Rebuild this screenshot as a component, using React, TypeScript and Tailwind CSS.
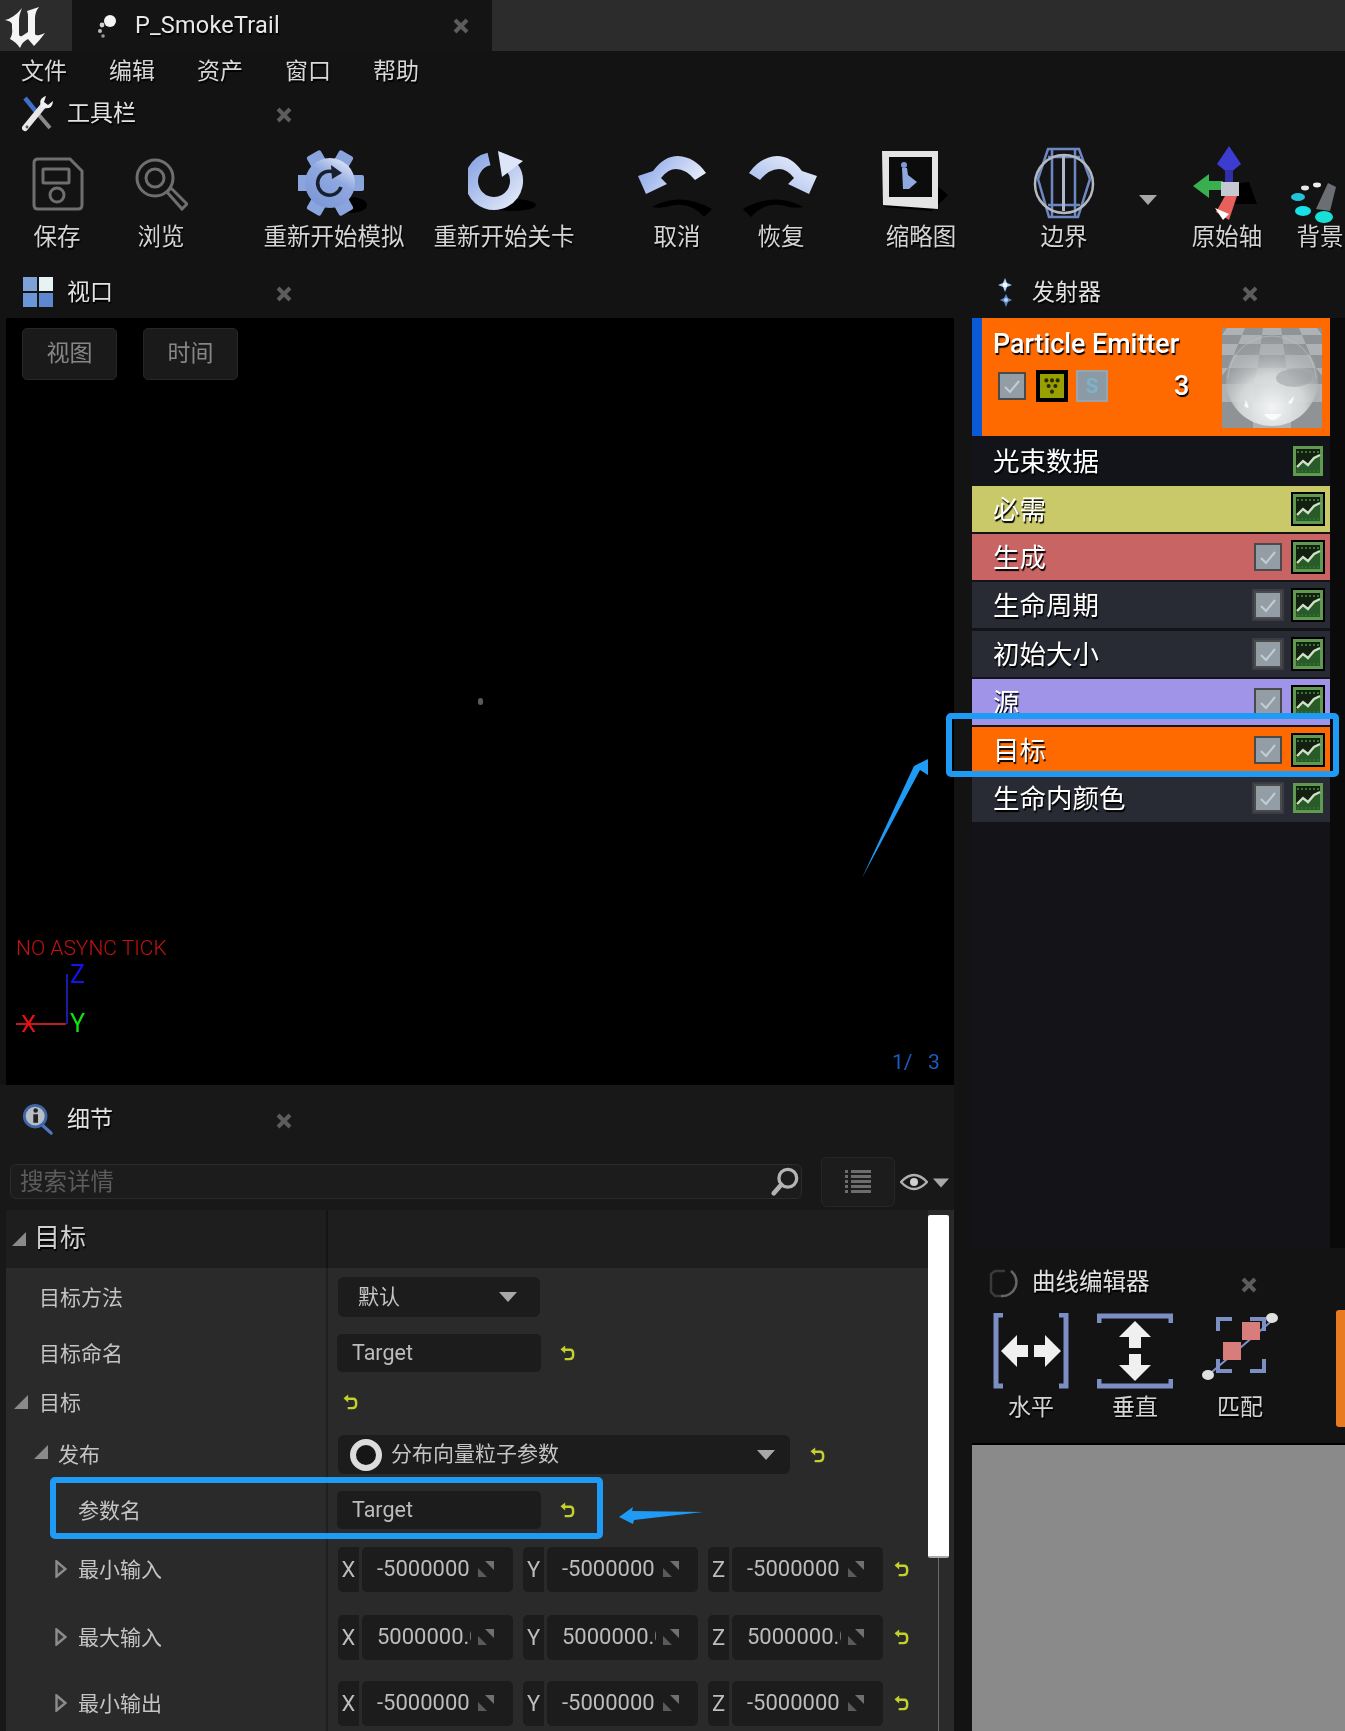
import React from "react";

const ts = "[text-shadow:1px_2px_1px_#000]";

function Close({ className = "" }: { className?: string }) {
  return (
    <svg viewBox="0 0 16 16" className={`w-[16px] h-[16px] shrink-0 ${className}`}>
      <path d="M2 2 L14 14 M14 2 L2 14" stroke="#5c5c5c" strokeWidth="4" />
    </svg>
  );
}
function DownTri({ className = "" }: { className?: string }) {
  return (
    <svg viewBox="0 0 18 10" className={`w-[18px] h-[10px] shrink-0 ${className}`}>
      <path d="M0 0 H18 L9 10 Z" fill="#a8a8a8" />
    </svg>
  );
}
function CornerTri({ size = 14, color = "#8a8a8a" }: { size?: number; color?: string }) {
  return (
    <svg viewBox="0 0 14 14" width={size} height={size} className="shrink-0">
      <path d="M14 0 V14 H0 Z" fill={color} />
    </svg>
  );
}
function OpenTri() {
  return (
    <svg viewBox="0 0 12 18" className="w-[12px] h-[18px] shrink-0">
      <path d="M1.5 1.5 L10.5 9 L1.5 16.5 Z" fill="#333" stroke="#8c8c8c" strokeWidth="2.4" />
    </svg>
  );
}
function Undo({ className = "" }: { className?: string }) {
  return (
    <svg viewBox="0 0 16 17" className={`w-[15px] h-[16px] shrink-0 ${className}`}>
      <path d="M5 5 H11 Q14 5 14 9 V11 Q14 15 10 15 H5" fill="none" stroke="#c4d02c" strokeWidth="2.6" />
      <path d="M0.5 4.5 L5.5 0.5 V9 Z" fill="#c4d02c" />
    </svg>
  );
}
function Check({ ring = false }: { ring?: boolean }) {
  return (
    <div
      className={`w-[28px] h-[28px] shrink-0 flex items-center justify-center bg-[#929da6] border-2 border-[#4a4a4a] ${
        ring ? "shadow-[0_0_0_2px_#3a3c45]" : ""
      }`}
    >
      <svg viewBox="0 0 20 20" className="w-[20px] h-[20px]">
        <path d="M3 11 L8 16 L17 5" fill="none" stroke="#c5ccd2" strokeWidth="2" />
      </svg>
    </div>
  );
}
function Graph({ dark = false }: { dark?: boolean }) {
  return (
    <div className={`w-[30px] h-[30px] shrink-0 ${dark ? "outline-2 outline-black" : ""}`}>
      <svg viewBox="0 0 30 30" className="w-[30px] h-[30px] block">
        <rect width="30" height="30" fill="#5f9a50" />
        <rect x="3" y="3" width="24" height="24" fill="#12200f" />
        <path d="M4 6 H27 M4 25 H27" stroke="#3f7238" strokeWidth="2" strokeDasharray="2 2" />
        <path d="M3 27 L3 22 L10 15 L15 19 L21 12 L27 9 V27 Z" fill="#2f6a2e" opacity="0.8" />
        <path d="M4 21 L10 15 L15 19 L21 12 L27 9" fill="none" stroke="#cfe0c6" strokeWidth="2.4" />
      </svg>
    </div>
  );
}

function ULogo() {
  return (
    <svg viewBox="0 0 44 44" className="w-[44px] h-[44px]">
      <path
        d="M3 16 Q12 14 20 4 Q17 11 17 16 V30 Q17 33 20 32 L26 28 V13 Q26 9 25 7 L37 3 Q33 8 33 14 V30 Q34 33 43 29 Q38 36 32 42 L26 35 Q20 38 18 44 Q14 38 8 35 Q11 30 10 24 V20 Q9 17 3 16 Z"
        fill="#f4f4f4"
      />
    </svg>
  );
}
function TabParticle() {
  return (
    <svg viewBox="0 0 24 30" className="w-[24px] h-[30px]">
      <circle cx="15" cy="10" r="6" fill="#f4f4f4" />
      <circle cx="7" cy="14" r="2.4" fill="#cfcfcf" />
      <circle cx="5" cy="20" r="2" fill="#bbb" />
      <circle cx="8" cy="25" r="1.8" fill="#999" />
    </svg>
  );
}
function ToolsIcon() {
  return (
    <svg viewBox="0 0 32 38" className="w-[32px] h-[38px]">
      <path d="M3 4 L16 20" stroke="#3f6fc8" strokeWidth="4.5" />
      <path d="M16 20 L28 34" stroke="#8a8a8a" strokeWidth="4" />
      <path d="M3 34 L21 12" stroke="#e8e8e8" strokeWidth="6" strokeLinecap="round" />
      <path d="M20 14 Q15 5 24 2 L22 8 L26 11 L31 7 Q31 16 20 14 Z" fill="#f0f0f0" />
      <circle cx="5" cy="33" r="1.4" fill="#555" />
    </svg>
  );
}
function SaveIcon() {
  return (
    <svg viewBox="0 0 54 54" className="w-[54px] h-[54px]">
      <path d="M4 6 Q4 2 8 2 H40 L52 14 V48 Q52 52 48 52 H8 Q4 52 4 48 Z" fill="none" stroke="#6f6f6f" strokeWidth="3" />
      <rect x="13" y="12" width="26" height="14" rx="1" fill="none" stroke="#6f6f6f" strokeWidth="3" />
      <circle cx="27" cy="38" r="7" fill="none" stroke="#6f6f6f" strokeWidth="3" />
    </svg>
  );
}
function BrowseIcon() {
  return (
    <svg viewBox="0 0 54 54" className="w-[54px] h-[54px]">
      <circle cx="21" cy="21" r="18" fill="none" stroke="#6f6f6f" strokeWidth="3" />
      <circle cx="21" cy="21" r="9" fill="none" stroke="#6f6f6f" strokeWidth="3" />
      <path d="M33 35 L37 31 L53 47 L48 52 Z" fill="none" stroke="#6f6f6f" strokeWidth="3" />
    </svg>
  );
}
function GearIcon() {
  return (
    <svg viewBox="298 141 72 78" className="w-[72px] h-[78px]">
      <defs>
        <linearGradient id="gg" x1="0.8" y1="0" x2="0.2" y2="1">
          <stop offset="0" stopColor="#e2e9f8" />
          <stop offset="0.4" stopColor="#90a8e0" />
          <stop offset="1" stopColor="#7a96d6" />
        </linearGradient>
      </defs>
      <ellipse cx="350" cy="204" rx="17" ry="8" fill="#000" />
      <g fill="#8aa4de">
        {[30, 90, 150, 210, 270, 330].map((a) => (
          <rect key={a} x="322" y="148" width="16" height="14" rx="2" transform={`rotate(${a} 330 182)`} />
        ))}
      </g>
      <circle cx="330" cy="182" r="25" fill="url(#gg)" />
      <path d="M341 186 A12 12 0 1 1 334 171" fill="none" stroke="#16202f" strokeWidth="3.5" />
      <path d="M331 164 L342 172 L332 178 Z" fill="#16202f" />
    </svg>
  );
}
function RestartIcon() {
  return (
    <svg viewBox="468 141 72 78" className="w-[72px] h-[78px]">
      <defs>
        <linearGradient id="rg" x1="0" y1="0" x2="1" y2="1">
          <stop offset="0" stopColor="#8ca6e4" />
          <stop offset="1" stopColor="#e0e7f8" />
        </linearGradient>
      </defs>
      <ellipse cx="512" cy="204" rx="24" ry="6" fill="#000" />
      <path d="M489 158 A22.5 22.5 0 1 0 512 166.4" fill="none" stroke="url(#rg)" strokeWidth="13" />
      <path d="M498 150 L523 160 L502 176 Z" fill="#dde5f8" />
    </svg>
  );
}
const undoD =
  "M638 175 L653 170 Q664 155 678 155 Q695 156 706 172 L695 179 Q686 168 676 168 Q668 168 661 177 L667 183 L646 193 Z";
const undoShadow = "M652 206 Q680 190 712 208 L704 216 Q690 200 670 205 Q660 208 652 206 Z";
function UndoBig() {
  return (
    <svg viewBox="632 141 90 78" className="w-[90px] h-[78px]">
      <defs>
        <linearGradient id="ug" x1="0" y1="0.3" x2="1" y2="0.7">
          <stop offset="0" stopColor="#8ea8e8" />
          <stop offset="1" stopColor="#eef2fc" />
        </linearGradient>
      </defs>
      <path d={undoShadow} fill="#000" />
      <path d={undoD} fill="url(#ug)" />
    </svg>
  );
}
function RedoBig() {
  return (
    <svg viewBox="736 141 90 78" className="w-[90px] h-[78px]">
      <defs>
        <linearGradient id="rdg" x1="0" y1="0" x2="1" y2="1">
          <stop offset="0" stopColor="#f0f4fc" />
          <stop offset="1" stopColor="#9cb4ea" />
        </linearGradient>
      </defs>
      <g transform="translate(1455 0) scale(-1 1)">
        <path d={undoShadow} fill="#000" />
        <path d={undoD} fill="url(#rdg)" />
      </g>
    </svg>
  );
}
function ThumbIcon() {
  return (
    <svg viewBox="0 0 72 72" className="w-[72px] h-[72px] -translate-x-[9px]">
      <path d="M8 62 L56 66 L72 50 L60 40 Z" fill="#000" />
      <path d="M6 6 H62 V64 L7 60 Z" fill="#e4e4e4" />
      <rect x="13" y="12" width="43" height="40" fill="#0c0c0c" />
      <circle cx="28" cy="20" r="3" fill="#7f9ad8" />
      <path d="M26 23 H31 L32 30 L41 37 L33 44 H27 Z" fill="#8fa8e0" />
    </svg>
  );
}
function BoundsIcon() {
  return (
    <svg viewBox="0 0 64 74" className="w-[64px] h-[74px]">
      <path d="M16 2 H47 L58 32 L46 70 H17 L6 32 Z" fill="none" stroke="#6d87c4" strokeWidth="2.5" />
      <path d="M20 3 V70 M43 3 V70 M16 10 H48 M16 58 H48" stroke="#6d87c4" strokeWidth="2.5" />
      <path d="M30 8 H33 V64 H30 Z" fill="#aeb8cc" />
      <circle cx="32" cy="37" r="29" fill="none" stroke="#b4b8c0" strokeWidth="2.5" />
    </svg>
  );
}
function OriginIcon() {
  return (
    <svg viewBox="0 0 72 76" className="w-[72px] h-[76px]">
      <path d="M40 60 L66 60 L58 38 L42 40 Z" fill="#000" />
      <path d="M38 2 L50 20 L38 30 L26 20 Z" fill="#3c3cd0" />
      <rect x="34" y="26" width="8" height="16" fill="#2f2fa8" />
      <path d="M2 42 L18 30 V37 H32 V46 H18 V54 Z" fill="#38b050" />
      <rect x="30" y="38" width="18" height="14" fill="#c4c8d0" />
      <path d="M34 52 H46 L38 76 L25 68 Z" fill="#e8605c" />
      <path d="M24 64 L38 70 L32 76 Z" fill="#fff" />
    </svg>
  );
}
function BgIcon() {
  return (
    <svg viewBox="0 0 56 44" className="w-[56px] h-[44px]">
      <path d="M26 30 L38 4 L46 8 L40 32 Z" fill="#6b6f74" />
      <ellipse cx="8" cy="18" rx="7" ry="4" fill="#22c4dc" />
      <ellipse cx="13" cy="32" rx="8" ry="5" fill="#18e0e8" />
      <ellipse cx="34" cy="38" rx="9" ry="6" fill="#18e0d8" />
      <ellipse cx="15" cy="9" rx="4" ry="2.4" fill="#e8e8e8" />
      <ellipse cx="27" cy="6" rx="4" ry="2.4" fill="#f0f0f0" />
    </svg>
  );
}
function ViewIcon() {
  return (
    <svg viewBox="0 0 30 30" className="w-[30px] h-[30px]">
      <rect x="0" y="0" width="14" height="14" fill="#7ea2d8" />
      <rect x="16" y="0" width="14" height="14" fill="#e6f2f4" />
      <rect x="0" y="16" width="14" height="14" fill="#6a96d8" />
      <rect x="16" y="16" width="14" height="14" fill="#5c88d0" />
    </svg>
  );
}
function EmitterIcon() {
  return (
    <svg viewBox="0 0 20 32" className="w-[20px] h-[32px]">
      <path d="M9 2 L11 7 L16 9 L11 11 L9 16 L7 11 L2 9 L7 7 Z" fill="#a8ccf8" />
      <circle cx="9" cy="9" r="2.4" fill="#f4f8ff" />
      <path d="M10 18 L12 22 L16 24 L12 26 L10 31 L8 26 L4 24 L8 22 Z" fill="#5c88c8" />
      <circle cx="10" cy="24" r="2" fill="#b8d4f4" />
    </svg>
  );
}
function InfoIcon() {
  return (
    <svg viewBox="0 0 34 34" className="w-[34px] h-[34px]">
      <path d="M22 24 L31 32" stroke="#4c78c0" strokeWidth="3.5" strokeLinecap="round" />
      <circle cx="14" cy="14" r="13" fill="#3e66a8" />
      <circle cx="14" cy="14" r="10" fill="#b8bcc4" />
      <rect x="12" y="12" width="5" height="9" fill="#222" />
      <circle cx="14.5" cy="8" r="2.4" fill="#222" />
    </svg>
  );
}
function SearchIcon() {
  return (
    <svg viewBox="0 0 32 32" className="w-[30px] h-[30px]">
      <circle cx="19" cy="12" r="9.5" fill="none" stroke="#b4b4b4" strokeWidth="3.5" />
      <path d="M12 19 L4 28" stroke="#b4b4b4" strokeWidth="5" strokeLinecap="round" />
    </svg>
  );
}
function ListIcon() {
  return (
    <svg viewBox="0 0 28 28" className="w-[28px] h-[28px]">
      {[2, 7, 12, 17, 22].map((y) => (
        <g key={y}>
          <rect x="1" y={y} width="3" height="3" fill="#6c6c6c" />
          <rect x="7" y={y} width="20" height="3" fill="#6c6c6c" />
        </g>
      ))}
    </svg>
  );
}
function EyeIcon() {
  return (
    <svg viewBox="0 0 28 18" className="w-[28px] h-[18px]">
      <path d="M1 9 Q14 -5 27 9 Q14 23 1 9 Z" fill="none" stroke="#b0b0b0" strokeWidth="2.4" />
      <circle cx="14" cy="9" r="4" fill="#d0d0d0" />
    </svg>
  );
}
function CurveIcon() {
  return (
    <svg viewBox="0 0 30 30" className="w-[30px] h-[30px]">
      <path d="M16 3 H6 L2 6 V24 L6 28 H14" fill="none" stroke="#3a3a3a" strokeWidth="2.5" />
      <path d="M22 3 A14 14 0 0 1 12 28" fill="none" stroke="#666" strokeWidth="2.5" />
    </svg>
  );
}
function HIcon() {
  return (
    <svg viewBox="0 0 76 76" className="w-[76px] h-[76px]">
      <path d="M10 2 H3 V73 H10 M66 2 H73 V73 H66" fill="none" stroke="#7c8fc4" strokeWidth="5" />
      <path d="M8 38 L24 22 V32 H35 V44 H24 V54 Z M68 38 L52 22 V32 H41 V44 H52 V54 Z" fill="#f0f0f0" />
    </svg>
  );
}
function VIcon() {
  return (
    <svg viewBox="0 0 76 76" className="w-[76px] h-[76px]">
      <path d="M2 10 V3 H74 V10 M2 66 V73 H74 V66" fill="none" stroke="#7c8fc4" strokeWidth="5" />
      <path d="M38 8 L54 24 H44 V35 H32 V24 H22 Z M38 68 L54 52 H44 V41 H32 V52 H22 Z" fill="#f0f0f0" />
    </svg>
  );
}
function FitIcon() {
  return (
    <svg viewBox="0 0 80 76" className="w-[80px] h-[76px]">
      <path d="M18 18 V6 H32 M50 6 H64 V18 M18 46 V58 H32 M50 58 H64 V46" fill="none" stroke="#7c8fc4" strokeWidth="4" />
      <path d="M6 64 L74 6" stroke="#8094c8" strokeWidth="2" />
      <rect x="42" y="9" width="18" height="18" fill="#d87c7c" />
      <rect x="23" y="29" width="18" height="18" fill="#d87c7c" />
      <ellipse cx="72" cy="5" rx="6" ry="5" fill="#e0e0e0" />
      <ellipse cx="8" cy="62" rx="6" ry="5" fill="#e0e0e0" />
    </svg>
  );
}
function Sphere() {
  const rows: [number, number][] = [[0, 7], [7, 16], [16, 27], [27, 40], [40, 56], [56, 74], [74, 100]];
  const wAt = (y: number) => 18 + (y < 56 ? y * 0.28 : 20);
  const cells: string[] = [];
  rows.forEach(([a, b], i) => {
    for (let j = -5; j <= 5; j++) {
      if ((i + j + 100) % 2 === 0) continue;
      const xa = 50 + (j - 0.5) * wAt(a);
      const xb = 50 + (j + 0.5) * wAt(a);
      const xc = 50 + (j + 0.5) * wAt(b);
      const xd = 50 + (j - 0.5) * wAt(b);
      cells.push(`M${xa} ${a} L${xb} ${a} L${xc} ${b} L${xd} ${b} Z`);
    }
  });
  return (
    <svg viewBox="0 0 100 100" className="w-[100px] h-[100px] shrink-0 mt-[10px]">
      <defs>
        <radialGradient id="sph" cx="0.5" cy="0.8" r="0.8">
          <stop offset="0" stopColor="#f2f4f4" />
          <stop offset="0.45" stopColor="#d6dadb" stopOpacity="0.9" />
          <stop offset="0.8" stopColor="#a8acae" stopOpacity="0.35" />
          <stop offset="1" stopColor="#a0a4a6" stopOpacity="0.15" />
        </radialGradient>
      </defs>
      <rect width="100" height="100" fill="#aeb2b4" />
      <path d={cells.join(" ")} fill="#8f9395" />
      <circle cx="50" cy="52" r="46" fill="url(#sph)" />
      <path d="M6 50 A44 44 0 0 1 50 8 A44 44 0 0 1 94 50" fill="none" stroke="#c8cbcc" strokeWidth="0.7" opacity="0.7" />
      <ellipse cx="72" cy="50" rx="18" ry="9" fill="#9a9ea0" opacity="0.55" />
      <path d="M24 72 Q30 84 22 78 Z M42 86 Q50 98 60 86 Z M66 74 Q70 80 72 68 Z" fill="#fff" opacity="0.75" />
    </svg>
  );
}

function PanelHead({ icon, title, iconW, padL, gap, w, size = "text-[23px]" }: { icon: React.ReactNode; title: string; iconW: string; padL: string; gap: string; w: string; size?: string }) {
  return (
    <div className={`flex items-center h-full ${padL}`}>
      <div className={`flex items-center justify-center shrink-0 ${iconW}`}>{icon}</div>
      <div className={`${gap} ${w} ${size} leading-none text-[#e2e2e2] whitespace-nowrap ${ts}`}>{title}</div>
      <Close className="mt-[3px]" />
    </div>
  );
}

function Tool({ w, ml, label, icon, shift = "translate-y-[6px]" }: { w: string; ml: string; label: string; icon: React.ReactNode; shift?: string }) {
  return (
    <div className={`flex flex-col items-center shrink-0 ${w} ${ml}`}>
      <div className={`h-[85px] flex items-center justify-center ${shift}`}>{icon}</div>
      <div className={`h-[34px] leading-[34px] text-[23.5px] text-[#d4d4d4] whitespace-nowrap ${ts}`}>{label}</div>
    </div>
  );
}

function ERow({ label, bg, check = "ring", dark = false, extra = "" }: { label: string; bg: string; check?: "plain" | "ring" | "none"; dark?: boolean; extra?: string }) {
  return (
    <div className={`h-[46px] flex items-center pl-[21px] pr-[7px] shrink-0 ${bg} ${extra}`}>
      <div className={`flex-1 pt-[2px] text-[26.5px] leading-none text-white whitespace-nowrap ${ts}`}>{label}</div>
      {check !== "none" && <Check ring={check === "ring"} />}
      <div className="ml-[11px]">
        <Graph dark={dark} />
      </div>
    </div>
  );
}

function DRow({ h, pad, tri, label, children }: { h: string; pad: string; tri?: React.ReactNode; label: string; children?: React.ReactNode }) {
  return (
    <div className={`flex items-center shrink-0 ${h}`}>
      <div className={`w-[322px] h-full flex items-center shrink-0 border-r-2 border-[#1f1f1f] ${pad}`}>
        {tri}
        <span className="pt-[2px] text-[21px] leading-none text-[#c4c4c4] whitespace-nowrap">{label}</span>
      </div>
      <div className="flex-1 h-full flex items-center pl-[10px] min-w-0">{children}</div>
    </div>
  );
}

function Spin() {
  return (
    <svg viewBox="0 0 16 16" className="w-[16px] h-[16px] shrink-0">
      <path d="M16 0 V9 L7 0 Z" fill="#707070" />
      <path d="M0 16 V7 L9 16 Z" fill="#5a5a5a" />
    </svg>
  );
}
function Num({ axis, v }: { axis: string; v: string }) {
  return (
    <div className="flex h-[45px] w-[175px] shrink-0 gap-[3px]">
      <div className="w-[21px] bg-[#1c1c1c] rounded-l-[5px] flex items-center justify-center text-[22px] text-[#bcbcbc]">{axis}</div>
      <div className="flex-1 bg-[#1c1c1c] rounded-[5px] flex items-center pl-[15px]">
        <div className="w-[94px] overflow-hidden whitespace-nowrap text-[22px] leading-none text-[#bcbcbc]">{v}</div>
        <div className="ml-[7px]">
          <Spin />
        </div>
      </div>
    </div>
  );
}
function Vec({ v }: { v: string }) {
  return (
    <div className="flex items-center gap-[10px]">
      <Num axis="X" v={v} />
      <Num axis="Y" v={v} />
      <Num axis="Z" v={v} />
      <Undo className="ml-[1px]" />
    </div>
  );
}
function TextInput() {
  return (
    <div className="flex items-center">
      <div className="w-[204px] h-[38px] -ml-[1px] bg-[#1c1c1c] rounded-[5px] flex items-center pl-[15px] text-[21.5px] leading-none text-[#bcbcbc]">Target</div>
      <Undo className="ml-[19px]" />
    </div>
  );
}

export default function App() {
  return (
    <div className="relative w-[1345px] h-[1731px] overflow-hidden bg-[#131313] flex flex-col blur-[0.5px] [font-family:Roboto,'Noto_Sans_CJK_SC',sans-serif]">
      {/* title bar */}
      <div className="h-[51px] shrink-0 flex bg-[#2c2c2c]">
        <div className="w-[72px] flex items-center pl-[2px] bg-[#2c2c2c]">
          <ULogo />
        </div>
        <div className="w-[420px] bg-[#141414] flex items-center pl-[23px]">
          <TabParticle />
          <div className={`ml-[16px] w-[318px] text-[23.5px] leading-none tracking-[0.2px] text-[#e8e8e8] whitespace-nowrap ${ts}`}>P_SmokeTrail</div>
          <Close />
        </div>
      </div>
      {/* menu */}
      <div className="h-[40px] shrink-0 flex items-center pl-[21px] gap-[42px] text-[23px] leading-none text-[#d8d8d8]">
        {["文件", "编辑", "资产", "窗口", "帮助"].map((m) => (
          <span key={m} className={`w-[46px] whitespace-nowrap ${ts}`}>
            {m}
          </span>
        ))}
      </div>
      {/* toolbar head */}
      <div className="h-[44px] shrink-0">
        <PanelHead icon={<ToolsIcon />} title="工具栏" iconW="w-[32px]" padL="pl-[22px]" gap="ml-[13px]" w="w-[209px]" />
      </div>
      {/* toolbar */}
      <div className="h-[127px] shrink-0 flex items-start pl-[11px] overflow-hidden">
        <Tool w="w-[92px]" ml="" label="保存" icon={<SaveIcon />} />
        <Tool w="w-[92px]" ml="ml-[12px]" label="浏览" icon={<BrowseIcon />} />
        <Tool w="w-[144px]" ml="ml-[55px]" label="重新开始模拟" icon={<GearIcon />} shift="translate-y-[3px]" />
        <Tool w="w-[144px]" ml="ml-[26px]" label="重新开始关卡" icon={<RestartIcon />} shift="translate-y-[3px]" />
        <Tool w="w-[92px]" ml="ml-[55px]" label="取消" icon={<UndoBig />} shift="translate-y-[3px]" />
        <Tool w="w-[92px]" ml="ml-[12px]" label="恢复" icon={<RedoBig />} shift="translate-y-[3px]" />
        <Tool w="w-[92px]" ml="ml-[48px]" label="缩略图" icon={<ThumbIcon />} shift="translate-y-[3px]" />
        <Tool w="w-[92px]" ml="ml-[51px]" label="边界" icon={<BoundsIcon />} />
        <div className="ml-[29px] mt-[60px] shrink-0">
          <DownTri />
        </div>
        <Tool w="w-[92px]" ml="ml-[24px]" label="原始轴" icon={<OriginIcon />} shift="translate-y-[4px]" />
        <Tool w="w-[92px]" ml="ml-[1px]" label="背景" icon={<div className="mt-[34px] -ml-[4px]"><BgIcon /></div>} />
      </div>

      {/* main area */}
      <div className="flex-1 flex min-h-0">
        {/* left column */}
        <div className="w-[954px] shrink-0 flex flex-col">
          <div className="h-[56px] shrink-0 pt-[4px]">
            <PanelHead icon={<ViewIcon />} title="视口" iconW="w-[32px]" padL="pl-[22px]" gap="ml-[13px]" w="w-[209px]" />
          </div>
          {/* viewport */}
          <div className="relative ml-[6px] h-[767px] shrink-0 bg-black p-[10px_0_0_16px] flex items-start gap-[26px]">
            {["视图", "时间"].map((b) => (
              <div key={b} className="w-[95px] h-[52px] bg-[#1a1a1a] border border-[#262626] rounded-[5px] flex items-center justify-center text-[23px] text-[#868686]">
                {b}
              </div>
            ))}
            <div className="absolute left-[472px] top-[380px] w-[5px] h-[7px] rounded-full bg-[#5a5a5a]" />
            <div className="absolute left-[10px] top-[618px] text-[21px] font-light leading-[24px] text-[#c41212] whitespace-nowrap">NO ASYNC TICK</div>
            <div className="absolute left-[60px] top-[656px] w-[2px] h-[50px] bg-[#1a1aa8]" />
            <div className="absolute left-[10px] top-[705px] w-[50px] h-[2px] bg-[#c01a1a]" />
            <div className="absolute left-[64px] top-[643px] text-[25px] leading-[28px] text-[#1414f0]">Z</div>
            <div className="absolute left-[15px] top-[692px] text-[24px] leading-[28px] text-[#f01010]">X</div>
            <div className="absolute left-[64px] top-[692px] text-[25px] leading-[28px] text-[#10e010]">Y</div>
            <div className="absolute left-[886px] top-[730px] text-[21px] leading-[28px] text-[#1a5cc0] whitespace-pre">1/   3</div>
          </div>
          {/* details */}
          <div className="flex-1 flex flex-col bg-[#181818] min-h-0">
            <div className="h-[72px] shrink-0 pb-[4px]">
              <PanelHead icon={<InfoIcon />} title="细节" iconW="w-[32px]" padL="pl-[22px]" gap="ml-[13px]" w="w-[209px]" />
            </div>
            <div className="h-[53px] shrink-0 flex items-start pl-[10px]">
              <div className="mt-[7px] w-[792px] h-[35px] bg-[#1c1c1c] border border-[#2b2b2b] rounded-[6px] flex items-center pl-[9px] pr-[1px]">
                <span className="flex-1 pt-[2px] text-[23.5px] leading-none text-[#5c5c5c]">搜索详情</span>
                <SearchIcon />
              </div>
              <div className="ml-[19px] w-[74px] h-[50px] bg-[#1c1c1c] border border-[#262626] rounded-[6px] flex items-center justify-center">
                <ListIcon />
              </div>
              <div className="ml-[5px] mt-[16px]">
                <EyeIcon />
              </div>
              <DownTri className="ml-[5px] mt-[21px] !w-[16px]" />
            </div>
            <div className="flex-1 ml-[6px] flex min-h-0 bg-[#2a2a2a]">
              <div className="w-[922px] shrink-0 flex flex-col">
                <div className="h-[58px] shrink-0 flex items-center bg-[#1e1e1e]">
                  <div className="w-[322px] h-full flex items-center pl-[6px] border-r-2 border-[#141414]">
                    <CornerTri />
                    <span className={`ml-[8px] -mt-[2px] text-[26px] leading-none text-[#cfcfcf] ${ts}`}>目标</span>
                  </div>
                </div>
                <DRow h="h-[58px]" pad="pl-[33px]" label="目标方法">
                  <div className="w-[202px] h-[40px] bg-[#1c1c1c] rounded-[6px] flex items-center pl-[20px] pr-[23px]">
                    <span className="flex-1 text-[21px] leading-none text-[#c4c4c4]">默认</span>
                    <DownTri />
                  </div>
                </DRow>
                <DRow h="h-[54px]" pad="pl-[33px]" label="目标命名">
                  <TextInput />
                </DRow>
                <DRow h="h-[44px]" pad="pl-[8px]" tri={<span className="mr-[11px]"><CornerTri /></span>} label="目标">
                  <Undo className="ml-[5px]" />
                </DRow>
                <DRow h="h-[61px]" pad="pl-[28px]" tri={<span className="mr-[10px] -mt-[6px]"><CornerTri /></span>} label="发布">
                  <div className="w-[452px] h-[39px] bg-[#1c1c1c] rounded-[6px] flex items-center pl-[12px] pr-[15px]">
                    <div className="w-[32px] h-[32px] rounded-full border-[6px] border-[#dcdcdc] bg-[#161616] shrink-0" />
                    <span className="flex-1 ml-[9px] text-[21px] leading-none text-[#c4c4c4]">分布向量粒子参数</span>
                    <DownTri />
                  </div>
                  <Undo className="ml-[20px]" />
                </DRow>
                <DRow h="h-[50px]" pad="pl-[72px]" label="参数名">
                  <TextInput />
                </DRow>
                <DRow h="h-[68px]" pad="pl-[49px]" tri={<span className="mr-[11px]"><OpenTri /></span>} label="最小输入">
                  <Vec v="-5000000.0" />
                </DRow>
                <DRow h="h-[68px]" pad="pl-[49px]" tri={<span className="mr-[11px]"><OpenTri /></span>} label="最大输入">
                  <Vec v="5000000.0" />
                </DRow>
                <DRow h="h-[64px]" pad="pl-[49px]" tri={<span className="mr-[11px]"><OpenTri /></span>} label="最小输出">
                  <Vec v="-5000000.0" />
                </DRow>
              </div>
              {/* scrollbar */}
              <div className="flex-1 flex flex-col items-start">
                <div className="w-[21px] mt-[5px] h-[343px] bg-white border-b-2 border-[#aaa] rounded-[2px] shrink-0" />
                <div className="ml-[10px] w-[1px] flex-1 bg-[#6a6a6a]" />
              </div>
            </div>
          </div>
        </div>

        {/* right column */}
        <div className="ml-[18px] flex-1 flex flex-col min-w-0">
          <div className="h-[56px] shrink-0 pt-[4px]">
            <PanelHead icon={<EmitterIcon />} title="发射器" iconW="w-[20px]" padL="pl-[24px]" gap="ml-[16px]" w="w-[210px]" />
          </div>
          <div className="h-[930px] shrink-0 flex">
            <div className="w-[358px] shrink-0 bg-[#141418] flex flex-col gap-[2px]">
              <div className="h-[118px] shrink-0 bg-[#ff6a00] flex">
                <div className="w-[10px] bg-[#0a5ad8] shrink-0" />
                <div className="flex-1 pl-[11px] pt-[10px]">
                  <div className={`h-[32px] leading-[32px] text-[26.8px] font-medium text-white whitespace-nowrap ${ts}`}>Particle Emitter</div>
                  <div className="mt-[10px] ml-[5px] flex items-center">
                    <Check />
                    <div className="ml-[10px] w-[32px] h-[32px] border-4 border-black bg-[#98a000] flex items-center justify-center">
                      <svg viewBox="0 0 16 16" className="w-[18px] h-[18px]">
                        <g fill="#2a2c00">
                          <circle cx="3" cy="3" r="1.8" /><circle cx="8" cy="3" r="1.8" /><circle cx="13" cy="3" r="1.8" />
                          <circle cx="5" cy="8" r="1.8" /><circle cx="11" cy="8" r="1.8" /><circle cx="8" cy="13" r="1.8" />
                        </g>
                      </svg>
                    </div>
                    <div className="ml-[8px] w-[32px] h-[32px] bg-[#8c9aa6] border-2 border-[#9aa4ac] flex items-center justify-center text-[21px] font-bold leading-none text-[#7fb2c6]">S</div>
                    <div className={`ml-[66px] text-[27px] font-medium leading-none text-white ${ts}`}>3</div>
                  </div>
                </div>
                <div className="pr-[8px]">
                  <Sphere />
                </div>
              </div>
              <ERow label="光束数据" bg="bg-[#12141a]" check="none" />
              <ERow label="必需" bg="bg-[#c9c96a]" check="none" dark />
              <ERow label="生成" bg="bg-[#c86464]" check="plain" dark />
              <ERow label="生命周期" bg="bg-[#282a34]" dark />
              <ERow label="初始大小" bg="bg-[#282a34]" extra="mt-[1px]" dark />
              <ERow label="源" bg="bg-[#a094e8]" check="plain" dark />
              <ERow label="目标" bg="bg-[#ff6a00]" check="plain" dark />
              <ERow label="生命内颜色" bg="bg-[#282a34]" extra="-mt-[1px] !h-[48px]" />
            </div>
            <div className="flex-1 bg-[#0a0a0a]" />
          </div>
          <div className="h-[62px] shrink-0 pt-[8px]">
            <PanelHead icon={<CurveIcon />} title="曲线编辑器" iconW="w-[30px]" padL="pl-[17px]" gap="ml-[13px]" w="w-[209px]" size="text-[23.5px]" />
          </div>
          <div className="h-[133px] shrink-0 flex items-start pl-[21px] relative">
            <div className="w-[76px] flex flex-col items-center">
              <div className="mt-[3px]"><HIcon /></div>
              <div className={`mt-[5px] text-[23px] leading-[28px] text-[#d4d4d4] whitespace-nowrap ${ts}`}>水平</div>
            </div>
            <div className="ml-[28px] w-[76px] flex flex-col items-center">
              <div className="mt-[3px]"><VIcon /></div>
              <div className={`mt-[5px] text-[23px] leading-[28px] text-[#d4d4d4] whitespace-nowrap ${ts}`}>垂直</div>
            </div>
            <div className="ml-[27px] w-[80px] flex flex-col items-center">
              <div className="mt-[3px]"><FitIcon /></div>
              <div className={`mt-[5px] text-[23px] leading-[28px] text-[#d4d4d4] whitespace-nowrap ${ts}`}>匹配</div>
            </div>
            <div className="ml-auto w-[9px] h-[117px] bg-[#e87a20] rounded-l-[3px]" />
          </div>
          <div className="flex-1 bg-[#8a8a8a] border-t-2 border-black" />
        </div>
      </div>

      {/* annotations */}
      <div className="absolute left-[946px] top-[713px] w-[393px] h-[64px] border-[6px] border-[#1f9bf5] rounded-[5px]" />
      <div className="absolute left-[50px] top-[1477px] w-[553px] h-[62px] border-[6px] border-[#1f9bf5] rounded-[5px]" />
      <svg className="absolute left-[850px] top-[750px] w-[90px] h-[140px]" viewBox="0 0 90 140">
        <path d="M12 128 L64 16 L78 9 L78 25 L70 20 Z" fill="#1f9bf5" />
      </svg>
      <svg className="absolute left-[615px] top-[1500px] w-[95px] h-[30px]" viewBox="0 0 95 30">
        <path d="M4 17 L18 7 L17 11 L88 12 L19 20 L18 24 Z" fill="#1f9bf5" />
      </svg>
    </div>
  );
}
